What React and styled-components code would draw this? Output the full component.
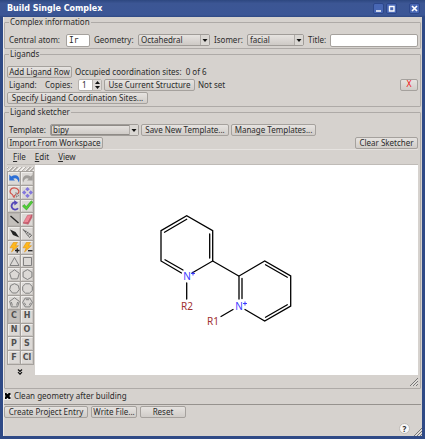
import React from "react";
import styled, { createGlobalStyle, css } from "styled-components";

const FONT = '"Noto Sans", "DejaVu Sans", sans-serif';

const GlobalStyle = createGlobalStyle`
  * { box-sizing: border-box; }
  body { margin: 0; background: #d6d2ce; }
  button, input, select { font: inherit; color: inherit; margin: 0; }
`;

const Window = styled.div`
  min-height: 100vh;
  display: flex;
  flex-direction: column;
  background: #d6d2ce;
  border: solid #2f4a86;
  border-width: 0 3px 3px;
  font: 8px/10px ${FONT};
  color: #2b2b2b;
  white-space: nowrap;
`;

const TitleBar = styled.header`
  height: 17px;
  display: flex;
  align-items: center;
  gap: 2px;
  margin: 0 -3px;
  padding: 0 5px 0 7px;
  background: linear-gradient(#2d4780, #3c5694 20%, #3b5696 88%, #2f4983);
  color: #fff;
`;

const Title = styled.h1`
  flex: 1;
  margin: 0;
  font: bold 8px/12px "DejaVu Sans", sans-serif;
`;

const TitleButton = styled.button`
  width: 11px;
  height: 11px;
  padding: 0;
  display: flex;
  border: 1px solid #2d478a;
  border-radius: 2px;
  background: #4867b4;
  margin-left: ${(p) => (p.$apart ? "10px" : "0")};
`;

const Body = styled.main`
  flex: 1;
  display: flex;
  flex-direction: column;
  padding: 0 1px 0 0;
  border: solid #edeae7;
  border-width: 0 0 0 1px;
`;

const Group = styled.fieldset`
  min-width: 0;
  margin: 0;
  padding: 7px 2px 2px;
  border: 1px solid #aeaaa7;
  border-radius: 1px;
  ${(p) =>
    p.$grow &&
    css`
      flex: 1;
      display: flex;
      flex-direction: column;
      padding-bottom: 0;
    `}
`;

const Legend = styled.legend`
  height: 10px;
  margin-left: 2px;
  padding: 0 1px;
`;

const Row = styled.div`
  display: flex;
  align-items: center;
  height: 12px;
  gap: 2px;
  margin-bottom: ${(p) => (p.$last ? 0 : 1)}px;
`;

const Label = styled.label`
  width: ${(p) => (p.$w ? `${p.$w}px` : "auto")};
  padding-left: 2px;
  flex: none;
`;

const Note = styled.span`
  padding-left: 1px;
  white-space: pre;
`;

const Spacer = styled.span`
  flex: 1;
`;

const Button = styled.button`
  width: ${(p) => (p.$w ? `${p.$w}px` : "auto")};
  height: 12px;
  padding: 0;
  flex: none;
  line-height: 10px;
  border: 1px solid #a5a19d;
  border-radius: 2px;
  background: linear-gradient(#e6e3e0, #d0ccc8);
  ${(p) =>
    p.$danger &&
    css`
      color: #f02020;
      font-family: "DejaVu Sans", sans-serif;
    `}
`;

const TextInput = styled.input`
  width: ${(p) => (p.$w ? `${p.$w}px` : "auto")};
  flex: ${(p) => (p.$w ? "none" : "1")};
  min-width: 0;
  height: 13px;
  padding: 0 2px;
  border: 1px solid #a5a19d;
  border-radius: 2px;
  background: #fff;
  font-family: "DejaVu Sans Mono", monospace;
`;

const SelectBox = styled.span`
  position: relative;
  width: ${(p) => p.$w}px;
  height: 12px;
  flex: none;

  select {
    display: block;
    width: 100%;
    height: 12px;
    padding: 0 2px;
    line-height: 10px;
    appearance: none;
    border: 1px solid #a09c98;
    border-radius: 2px;
    background: linear-gradient(#e6e3e0, #cdc9c5);
    box-shadow: ${(p) => (p.$sunken ? "inset 1px 1px #8f8b87, inset 0 -1px #8f8b87" : "none")};
  }
  svg {
    position: absolute;
    top: 1px;
    right: 1px;
    pointer-events: none;
    background: #dad7d3;
  }
`;

const Spin = styled.span`
  display: flex;
  width: 24px;
  height: 12px;
  border: 1px solid #b5b1ad;
  border-radius: 2px;
  background: #fff;

  input {
    flex: 1;
    min-width: 0;
    width: 100%;
    height: 10px;
    padding: 0 3px;
    border: 0;
    background: none;
    appearance: textfield;
  }
  input::-webkit-inner-spin-button { display: none; }
`;

const Steps = styled.span`
  display: flex;
  flex-direction: column;
  border-left: 1px solid #b5b1ad;
  background: #dedad7;
  button {
    display: flex;
    height: 5px;
    width: 8px;
    padding: 0;
    border: 0;
    background: none;
  }
`;

const MenuBar = styled.nav`
  display: flex;
  gap: 9px;
  height: 16px;
  padding: 2px 6px;
  border: solid;
  border-color: #e6e3e0 transparent #bfbbb7;
  border-width: 1px 0;
  button {
    padding: 0;
    border: 0;
    background: none;
    line-height: 10px;
  }
`;

const Sketcher = styled.div`
  flex: 1;
  display: flex;
  min-height: 210px;
`;

const Tools = styled.div`
  flex: none;
  width: 28px;
  display: flex;
  flex-direction: column;
  align-items: flex-start;
  padding-top: 2px;
`;

const Handle = styled.div`
  width: 27px;
  height: 4px;
  flex: none;
  background: repeating-linear-gradient(135deg, #f2f0ee 0 1px, #b2aeaa 1px 2px, #d6d2ce 2px 3px);
`;

const ToolGrid = styled.div`
  display: grid;
  grid-template: repeat(14, 1fr) / 1fr 1fr;
  width: 27px;
  height: 194px;
  border: 1px solid #a5a19d;
  gap: 1px;
  background: #a5a19d;
`;

const Tool = styled.button`
  min-width: 0;
  min-height: 0;
  padding: 0;
  display: flex;
  align-items: center;
  justify-content: center;
  border: 1px solid;
  border-color: ${(p) => (p.$on ? "#b8b4b0" : "#efedeb #cbc7c3 #cbc7c3 #efedeb")};
  background: ${(p) => (p.$on ? "#c3bfbb" : "#dcd9d6")};
  color: #505050;
  font-family: "DejaVu Sans", sans-serif;
  font-weight: bold;
  line-height: 10px;
  svg { flex: none; }
`;

const More = styled.button`
  margin: 4px 0 0 10px;
  padding: 0;
  display: flex;
  border: 0;
  background: none;
`;

const Canvas = styled.div`
  flex: 1;
  min-width: 0;
  background: #fff;
  svg {
    display: block;
    width: 100%;
    height: 100%;
  }
`;

const SketchFooter = styled.div`
  height: 13px;
  display: flex;
  justify-content: flex-end;
  align-items: center;
`;

const CheckRow = styled.label`
  display: flex;
  align-items: center;
  gap: 3px;
  height: 15px;
  padding-bottom: 1px;
  input {
    appearance: none;
    width: 7px;
    height: 7px;
    background: #efedeb;
    display: grid;
    place-items: center;
  }
  input:checked::before {
    content: "";
    width: 6px;
    height: 6px;
    background: #000;
    clip-path: polygon(0 0, 30% 0, 50% 22%, 70% 0, 100% 0, 100% 30%, 78% 50%, 100% 70%, 100% 100%, 70% 100%, 50% 78%, 30% 100%, 0 100%, 0 70%, 22% 50%, 0 30%);
  }
`;

const Actions = styled.div`
  display: flex;
  gap: 3px;
  padding-top: 1px;
  border-top: 1px solid #96928e;
`;

const Footer = styled.footer`
  display: flex;
  justify-content: flex-end;
  align-items: flex-end;
  gap: 4px;
  height: 18px;
  margin-right: -1px;
`;

const Help = styled.button`
  width: 11px;
  height: 11px;
  margin-bottom: 2px;
  padding: 0;
  border: 1px solid #c0bcb8;
  border-radius: 50%;
  background: #f8f8f8;
  font-weight: bold;
  line-height: 9px;
`;

function Select({ id, w, value, sunken }) {
  return (
    <SelectBox $w={w} $sunken={sunken}>
      <select id={id} defaultValue={value}>
        <option>{value}</option>
      </select>
      <svg width="9" height="10" viewBox="0 0 9 10">
        <path d="M.5 0v10" stroke="#b0aca8" />
        <path d="M2.5 4h5L5 7z" fill="#111" />
      </svg>
    </SelectBox>
  );
}

function Grip() {
  return (
    <svg width="8" height="8" viewBox="0 0 8 8" aria-hidden="true">
      <path d="M0 8 8 0M3 8l5-5M6 8l2-2" stroke="#777" fill="none" />
      <path d="M1.5 8 8 1.5M4.5 8 8 4.5" stroke="#f4f2f0" strokeWidth=".6" fill="none" />
    </svg>
  );
}

const outline = { fill: "none", stroke: "#777", strokeWidth: 0.9 };

const bolt = <path d="M4.5 .3h4L6.500 3.700H9.500L2.500 10 4.200 5.800H1z" fill="#ffb81c" stroke="#d98a10" strokeWidth=".5" />;

const TOOLS = [
  ["Undo", <path d="M.3 1.500v6h5.700L4.200 5.800C6.500 4.500 8.500 5.500 9.800 9.500 12 4 7.500 .3 2.200 3.500z" fill="#2c6fd6" />],
  ["Redo", <path d="M10.700 1.500v6H5L6.800 5.800C4.500 4.500 2.500 5.500 1.200 9.500-1 4 3.500 .3 8.800 3.500z" fill="#a09d9a" />],
  ["Lasso", <g fill="none"><path d="M5 10.300C3.500 9.500 4.500 7.800 3 7.200 -.3 5.800 1 .8 5.200 .8s6 4.200 3.300 5.900C6.800 7.600 5 7.500 5 10.300z" stroke="#d0564e" strokeWidth="1.200" /><path d="M7 5.500 9.800 8.800 8.300 8.900 7.400 10.300z" fill="#fff" stroke="#555" strokeWidth=".6" /></g>],
  ["Move", <path d="M5.500 0 7.800 2.300 5.500 4.300 3.200 2.300zM5.500 6.700 7.800 8.700 5.500 11 3.200 8.700zM0 5.500 2.300 3.200 4.300 5.500 2.300 7.800zM11 5.500 8.700 3.200 6.700 5.500 8.700 7.800z" fill="#8377dc" />],
  ["Rotate", <g fill="none" stroke="#5546b8" strokeWidth="1.800"><path d="M6 2.400A3.600 3.600 0 1 0 9 8.200" /><path d="M5.200 0 9 2.700 5.400 5.400z" fill="#5546b8" stroke="none" /></g>],
  ["Clean up", <path d="M.5 6.200 2.200 4.500 4.300 6.600 9.300 .8 10.800 2.200 4.500 10z" fill="#52cf36" stroke="#2f9d22" strokeWidth=".6" />],
  ["Single bond", <path d="M1.500 2 9.500 9" stroke="#222" strokeWidth="1.300" />, true],
  ["Erase", <g strokeWidth=".5"><path d="M5.500 1.300 10 .8 6 8.500 1.200 9z" fill="#ef8797" stroke="#b65361" /><path d="M10 .8v2.400L6.200 10.300 1.200 9l4.800-.5z" fill="#cf5d70" stroke="#b65361" /></g>],
  ["Wedge bond", <path d="M1 1.500 6.500 4 10.300 9.500 4 7z" fill="#222" />],
  ["Hashed bond", <g stroke="#444" fill="none"><path d="M1 1.500 9.500 7M1 1.500 7.500 9.500" strokeWidth=".6" /><path d="M3 4 4.200 3M4.500 5.800 6.200 4.300M6 7.700 8 5.700M7.500 9.500 9.700 7" strokeWidth=".8" /></g>],
  ["Increase charge", <g>{bolt}<path d="M6 8.500h4.500M8.250 6.250v4.500" stroke="#222" strokeWidth="1.300" /></g>],
  ["Decrease charge", <g>{bolt}<path d="M6 8.700h4.500" stroke="#222" strokeWidth="1.300" /></g>],
  ["Three-ring", <path d="M5.500 1.500 10 9.500H1z" {...outline} />],
  ["Four-ring", <path d="M1.500 1.500h8v8h-8z" {...outline} />],
  ["Five-ring", <path d="M5.500 .8 10.300 4.300 8.600 9.900h-6.200L.7 4.300z" {...outline} />],
  ["Six-ring", <path d="M5.500 .6 9.900 3.100v4.900L5.500 10.500 1.100 8V3.100z" {...outline} />],
  ["Seven-ring", <path d="M5.500 .7 9.300 2.500 10.300 6.500 7.600 10h-4.200L.7 6.500 1.700 2.500z" {...outline} />],
  ["Eight-ring", <path d="M3.500 .8h4L10.300 3.500v4L7.500 10.200h-4L.7 7.500v-4z" {...outline} />],
  ["Cyclopentadiene", <g {...outline}><path d="M5.500 .8 10.300 4.300 8.600 9.900h-6.200L.7 4.300z" /><path d="M8.600 5 7.600 8.500M2.400 5l1 3.500" /></g>],
  ["Benzene", <g {...outline}><path d="M3.100 1.100h4.800L10.400 5.500 7.900 9.900H3.100L.6 5.500z" /><path d="M3.800 2.700h3.400M2.300 5.600 3.800 8.300M8.700 5.600 7.200 8.300" /></g>],
];

const ELEMENTS = ["C", "H", "N", "O", "P", "S", "F", "Cl"];

function Molecule() {
  return (
    <svg viewBox="35 165 383 210" role="img" aria-label="bipy ligand">
      <g stroke="#000" strokeWidth="1.300" strokeLinecap="round" fill="none">
        <path d="M181.500 273 161 261V230.700L186.700 215.700 212.700 230.700V261L192 273" />
        <path d="M164.500 232.200 186.700 219.300M209.700 234V258M165 259.800 183 270" />
        <path d="M186.700 283V299M212.700 261 238.700 276M221 316.500 233 309.500" />
        <path d="M239 299V276L264.700 261 290.700 276V306L264.700 321 245 309.500" />
        <path d="M242 298.500V278.500M265.500 264.800 287.300 277.300M287.300 304.700 265.500 317.200" />
      </g>
      <g fontFamily={FONT} fontSize="10" textAnchor="middle">
        <g fill="#3a3aff">
          <text x="187" y="280">N</text>
          <text x="239" y="310">N</text>
          <g stroke="#3a3aff">
            <path d="M191 273.500h4M193 271.500v4M243 303.500h4M245 301.500v4" />
          </g>
        </g>
        <g fill="#a03030">
          <text x="187" y="310">R2</text>
          <text x="213" y="325">R1</text>
        </g>
      </g>
    </svg>
  );
}

export default function App() {
  return (
    <>
      <GlobalStyle />
      <Window>
        <TitleBar>
          <Title>Build Single Complex</Title>
          <TitleButton aria-label="Minimize">
            <svg width="9" height="9" viewBox="0 0 9 9"><path d="M2 7h5" stroke="#fff" strokeWidth="1.500" /></svg>
          </TitleButton>
          <TitleButton aria-label="Maximize">
            <svg width="9" height="9" viewBox="0 0 9 9"><path d="M2.500 2.500h4.500v4.500h-4.500z" fill="none" stroke="#fff" strokeWidth="1.400" /></svg>
          </TitleButton>
          <TitleButton aria-label="Close" $apart>
            <svg width="9" height="9" viewBox="0 0 9 9"><path d="m2 2 5 5M7 2 2 7" stroke="#fff" strokeWidth="1.700" /></svg>
          </TitleButton>
        </TitleBar>

        <Body>
          <Group>
            <Legend>Complex information</Legend>
            <Row $last>
              <Label htmlFor="atom" $w={57}>Central atom:</Label>
              <TextInput id="atom" $w={24} defaultValue="Ir" />
              <Label htmlFor="geometry" $w={44}>Geometry:</Label>
              <Select id="geometry" w={72} value="Octahedral" />
              <Label htmlFor="isomer" $w={33}>Isomer:</Label>
              <Select id="isomer" w={57} value="facial" />
              <Label htmlFor="title" $w={22}>Title:</Label>
              <TextInput id="title" />
            </Row>
          </Group>

          <Group>
            <Legend>Ligands</Legend>
            <Row>
              <Button $w={65}>Add Ligand Row</Button>
              <Note>Occupied coordination sites:  0 of 6</Note>
            </Row>
            <Row>
              <Label as="span" $w={34}>Ligand:</Label>
              <Label htmlFor="copies" $w={33}>Copies:</Label>
              <Spin>
                <input id="copies" type="number" defaultValue="1" />
                <Steps>
                  <button aria-label="More copies">
                    <svg width="8" height="5" viewBox="0 0 8 5"><path d="M2 4 4.500 1 7 4z" fill="#111" /></svg>
                  </button>
                  <button aria-label="Fewer copies">
                    <svg width="8" height="5" viewBox="0 0 8 5"><path d="M2 1 4.500 4 7 1z" fill="#111" /></svg>
                  </button>
                </Steps>
              </Spin>
              <Button $w={91}>Use Current Structure</Button>
              <Note>Not set</Note>
              <Spacer />
              <Button $w={18} $danger aria-label="Remove ligand">X</Button>
            </Row>
            <Row $last>
              <Button $w={141}>Specify Ligand Coordination Sites...</Button>
            </Row>
          </Group>

          <Group $grow>
            <Legend>Ligand sketcher</Legend>
            <Row>
              <Label htmlFor="template" $w={41}>Template:</Label>
              <Select id="template" w={89} value="bipy" sunken />
              <Button $w={88}>Save New Template...</Button>
              <Button $w={85}>Manage Templates...</Button>
            </Row>
            <Row $last>
              <Button $w={96}>Import From Workspace</Button>
              <Spacer />
              <Button $w={63}>Clear Sketcher</Button>
            </Row>
            <MenuBar>
              <button><u>F</u>ile</button>
              <button><u>E</u>dit</button>
              <button><u>V</u>iew</button>
            </MenuBar>
            <Sketcher>
              <Tools>
                <Handle />
                <ToolGrid>
                  {TOOLS.map(([name, icon, on]) => (
                    <Tool key={name} aria-label={name} $on={on}>
                      <svg width="11" height="11" viewBox="0 0 11 11">{icon}</svg>
                    </Tool>
                  ))}
                  {ELEMENTS.map((el) => (
                    <Tool key={el} $on={el === "C"}>{el}</Tool>
                  ))}
                </ToolGrid>
                <More aria-label="More tools">
                  <svg width="6" height="6" viewBox="0 0 6 6"><path d="m1 .5 2 2 2-2M1 3.200l2 2 2-2" fill="none" stroke="#111" strokeWidth="1.200" /></svg>
                </More>
              </Tools>
              <Canvas><Molecule /></Canvas>
            </Sketcher>
            <SketchFooter><Grip /></SketchFooter>
          </Group>

          <CheckRow>
            <input type="checkbox" defaultChecked />
            Clean geometry after building
          </CheckRow>
          <Actions>
            <Button $w={84}>Create Project Entry</Button>
            <Button $w={46}>Write File...</Button>
            <Button $w={46}>Reset</Button>
          </Actions>
          <Footer>
            <Help aria-label="Help">?</Help>
            <Grip />
          </Footer>
        </Body>
      </Window>
    </>
  );
}
